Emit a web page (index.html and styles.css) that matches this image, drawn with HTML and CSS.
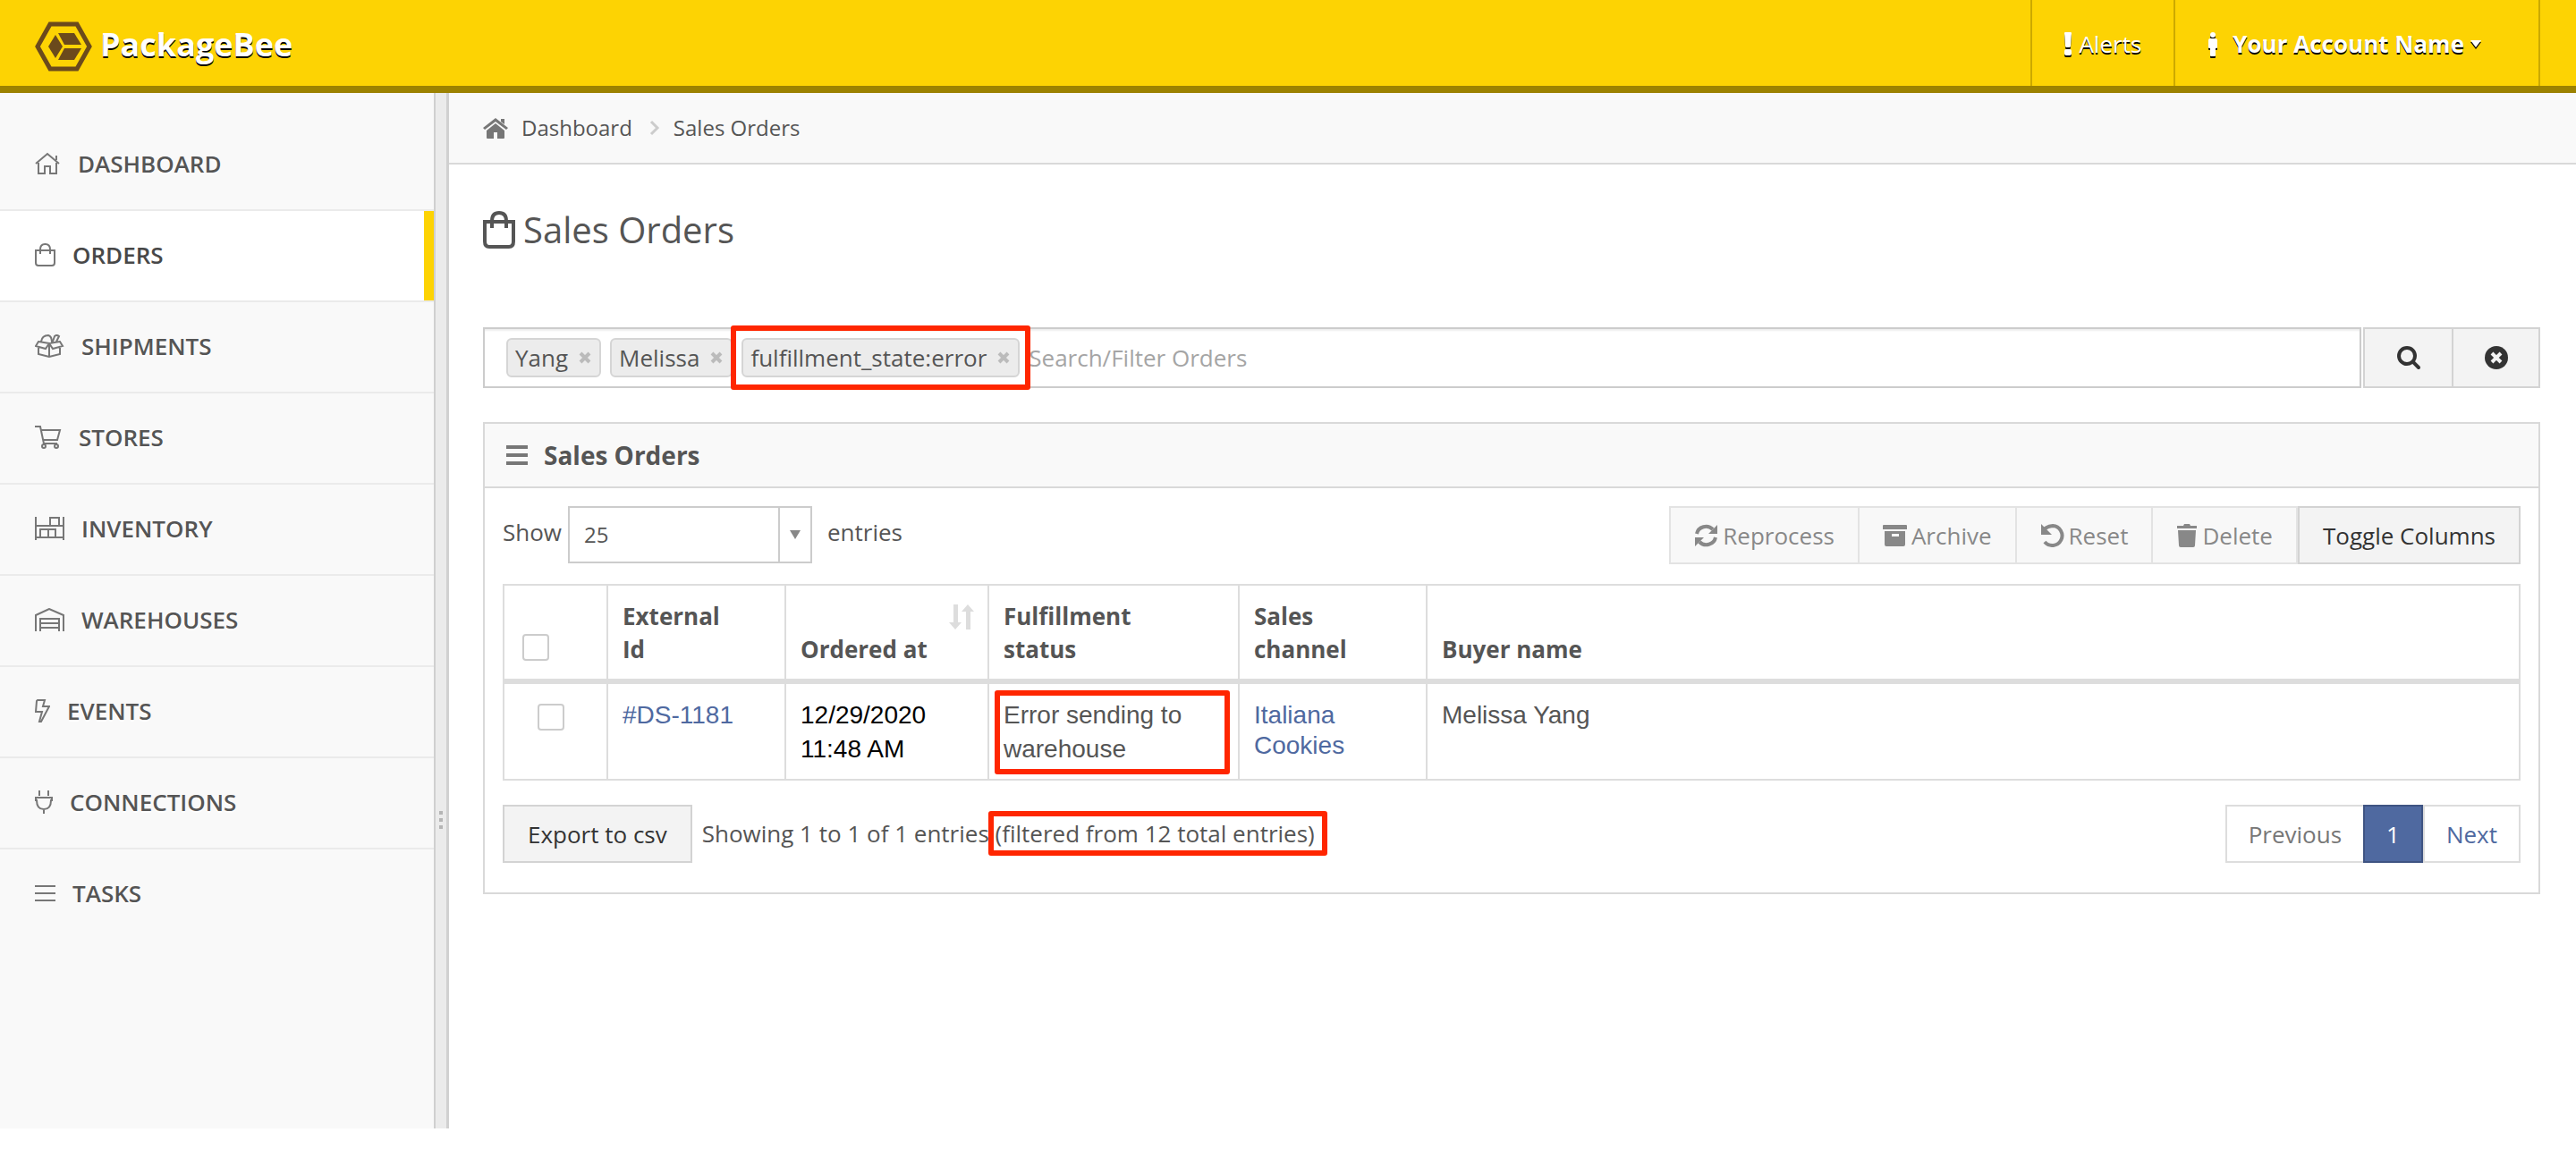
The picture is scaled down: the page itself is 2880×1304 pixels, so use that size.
FILE: index.html
```html
<!DOCTYPE html>
<html lang="en">
    <head>
        <meta charset="utf-8">
        <title>PackageBee - Sales Orders</title>
        <link rel="stylesheet" href="styles.css">
    </head>
    <body>
        <header class="navbar">
            <a class="brand" href="#">
                <svg class="logo" width="64" height="56" viewBox="0 0 64 56">
                    <path d="M17 3h30l14 25-14 25H17L3 28z" fill="none" stroke="#6b4a1c" stroke-width="5"/>
                    <path d="M26 13h18l8 13H33z" fill="#6b4a1c"/>
                    <path d="M33 30h19l-8 13H26z" fill="#6b4a1c"/>
                    <path d="M23 15l8 13-8 13-8-13z" fill="#6b4a1c"/>
                </svg>
                PackageBee
            </a>
            <nav class="user-nav">
                <a class="alerts" href="#">
                    <svg width="8" height="27" viewBox="0 0 8 27"><path d="M1 0h6q1 0 1 1L7 15q0 2-1 2H2q-1 0-1-2L0 1q0-1 1-1zM2 19h4q2 0 2 2v3q0 2-2 2H2q-2 0-2-2v-3q0-2 2-2z" fill="#fff"/></svg>
                    Alerts
                </a>
                <a class="account" href="#">
                    <svg width="12" height="27" viewBox="0 0 12 27"><circle cx="6" cy="3" r="3" fill="#fff"/><path d="M3 7h6q2 0 2 2v8q0 1-1 1H9v8q0 1-1 1H4q-1 0-1-1v-8H2q-1 0-1-1V9q0-2 2-2z" fill="#fff"/></svg>
                    <b>Your Account Name</b>
                    <svg class="caret" width="14" height="9" viewBox="0 0 14 9"><path d="M1 0h12L7 8z" fill="#fff"/></svg>
                </a>
            </nav>
        </header>

        <div class="layout">
            <nav class="sidebar">
                <a href="#">
                    <svg width="29" height="26" viewBox="0 0 29 26"><path d="M1 13L14 2l13 11M4 12v12h7v-8h6v8h7V12M24 9V4"/></svg>
                    Dashboard
                </a>
                <a class="active" href="#">
                    <svg width="23" height="26" viewBox="0 0 23 26"><path d="M1 8h21v14q0 3-3 3H4q-3 0-3-3zM6 12V7q0-6 5.500-6t5.500 6v5"/></svg>
                    Orders
                </a>
                <a href="#">
                    <svg width="33" height="26" viewBox="0 0 33 26"><path d="M4 14v8l12 3 12-3v-8M16 10v15M4 8l12 2-4 6-11-3zM28 8l-12 2 4 6 11-3zM7 8q1-7 8-7 4 1 4 8M20 8l2-6q2-2 5 0l-3 6"/></svg>
                    Shipments
                </a>
                <a href="#">
                    <svg width="30" height="26" viewBox="0 0 30 26"><path d="M0 1h6l4 19h15M7 5h21l-3 11H9"/><circle cx="10" cy="23" r="2"/><circle cx="24" cy="23" r="2"/></svg>
                    Stores
                </a>
                <a href="#">
                    <svg width="33" height="26" viewBox="0 0 33 26"><path d="M1 0v26M32 0v26M1 10h31M1 23h31M17 10V1h10v9M6 23v-9h17v9M15 14v9"/></svg>
                    Inventory
                </a>
                <a href="#">
                    <svg width="33" height="26" viewBox="0 0 33 26"><path d="M1 26V8l15-7 16 7v18M6 26V12h21v14M6 17h21M6 22h21"/></svg>
                    Warehouses
                </a>
                <a href="#">
                    <svg width="17" height="26" viewBox="0 0 17 26"><path d="M3 1h8l-2 7h7L7 25H5l3-11H1L2 2z"/></svg>
                    Events
                </a>
                <a href="#">
                    <svg width="20" height="26" viewBox="0 0 20 26"><path d="M5 0v6M15 0v6M1 8h18v3h-1q0 10-8 10T2 11H1zM10 21v5"/></svg>
                    Connections
                </a>
                <a href="#">
                    <svg width="23" height="26" viewBox="0 0 23 26"><path d="M0 5h23M0 13h23M0 21h23"/></svg>
                    Tasks
                </a>
            </nav>
            <div class="splitter"><i></i><i></i><i></i></div>

            <main class="content">
                <nav class="breadcrumb">
                    <svg width="28" height="23" viewBox="0 0 28 23"><path d="M14 0l14 11-2 2L14 4 2 13l-2-2zM20 1h4v6l-4-3zM14 6l10 8v8q0 1-1 1h-7v-7h-4v7H5q-1 0-1-1v-8z" fill="#777"/></svg>
                    <a href="#">Dashboard</a>
                    <svg class="chevron" width="12" height="18" viewBox="0 0 12 18"><path d="M2 2l7 7-7 7" fill="none" stroke="#ccc" stroke-width="3"/></svg>
                    <a href="#">Sales Orders</a>
                </nav>

                <h1>
                    <svg width="36" height="42" viewBox="0 0 36 42"><path d="M2 12h32v22q0 6-5 6H7q-5 0-5-6zM10 19v-8q0-9 8-9t8 9v8" fill="none" stroke="#555" stroke-width="4"/></svg>
                    Sales Orders
                </h1>

                <form class="search">
                    <div class="tag-field">
                        <span class="tag">Yang <button type="button" aria-label="Remove Yang"><svg width="14" height="14" viewBox="0 0 14 14"><path d="M2 2l10 10M12 2L2 12"/></svg></button></span>
                        <span class="tag">Melissa <button type="button" aria-label="Remove Melissa"><svg width="14" height="14" viewBox="0 0 14 14"><path d="M2 2l10 10M12 2L2 12"/></svg></button></span>
                        <span class="tag marked">fulfillment_state:error <button type="button" aria-label="Remove fulfillment_state:error"><svg width="14" height="14" viewBox="0 0 14 14"><path d="M2 2l10 10M12 2L2 12"/></svg></button></span>
                        <input type="text" aria-label="Search orders" placeholder="Search/Filter Orders">
                    </div>
                    <div class="search-buttons">
                        <button type="submit" aria-label="Search"><svg width="26" height="26" viewBox="0 0 1664 1664"><path d="M1152 704q0-185-131.500-316.500t-316.500-131.500-316.500 131.500-131.500 316.500 131.500 316.500 316.500 131.500 316.500-131.500 131.500-316.500zm512 832q0 52-38 90t-90 38q-54 0-90-38l-343-342q-179 124-399 124-143 0-273.500-55.500t-225-150-150-225-55.500-273.500 55.500-273.500 150-225 225-150 273.500-55.500 273.500 55.500 225 150 150 225 55.500 273.500q0 220-124 399l343 343q37 37 37 90z" fill="#333"/></svg></button>
                        <button type="reset" aria-label="Clear"><svg width="26" height="26" viewBox="0 0 26 26"><circle cx="13" cy="13" r="13" fill="#333"/><path d="M8 8l10 10M18 8L8 18" stroke="#f3f3f3" stroke-width="4"/></svg></button>
                    </div>
                </form>

                <section class="panel">
                    <h2>
                        <svg width="24" height="22" viewBox="0 0 24 22"><path d="M0 2h24M0 11h24M0 20h24" stroke="#777" stroke-width="4"/></svg>
                        Sales Orders
                    </h2>
                    <div class="panel-body">
                        <div class="toolbar">
                            <div class="page-length">
                                <label for="length">Show</label>
                                <span class="select">
                                    <select id="length">
                                        <option>10</option>
                                        <option selected>25</option>
                                        <option>50</option>
                                        <option>100</option>
                                    </select>
                                </span>
                                <span class="entries">entries</span>
                            </div>
                            <div class="btn-group">
                                <button class="btn" disabled>
                                    <svg width="27" height="26" viewBox="0 0 27 26"><path d="M3 11A10.500 10 0 0 1 21 6M24 15A10.500 10 0 0 1 6 20" fill="none" stroke="#888" stroke-width="4"/><path d="M26 1v10H16zM1 25V15h10z" fill="#888"/></svg>
                                    Reprocess
                                </button>
                                <button class="btn" disabled>
                                    <svg width="27" height="24" viewBox="0 0 27 24"><path d="M1 0h25q1 0 1 1v4H0V1q0-1 1-1zM2 7h23v15q0 2-2 2H4q-2 0-2-2zM10 10v3h8v-3z" fill="#888" fill-rule="evenodd"/></svg>
                                    Archive
                                </button>
                                <button class="btn" disabled>
                                    <svg width="27" height="26" viewBox="0 0 27 26"><path d="M4 6q5-4 10-4a11 11 0 1 1-9 18" fill="none" stroke="#888" stroke-width="4"/><path d="M1 0v12h12z" fill="#888"/></svg>
                                    Reset
                                </button>
                                <button class="btn" disabled>
                                    <svg width="24" height="26" viewBox="0 0 24 26"><path d="M9 0h6l1 2h7v3H1V2h7zM2 7h20l-1 17q0 2-2 2H5q-2 0-2-2z" fill="#888"/></svg>
                                    Delete
                                </button>
                                <button class="btn enabled">Toggle Columns</button>
                            </div>
                        </div>

                        <table class="orders">
                            <colgroup>
                                <col class="col-check">
                                <col class="col-id">
                                <col class="col-date">
                                <col class="col-status">
                                <col class="col-channel">
                                <col>
                            </colgroup>
                            <thead>
                                <tr>
                                    <th class="check-all"><input type="checkbox" aria-label="Select all"></th>
                                    <th>External<br>Id</th>
                                    <th class="sortable">
                                        Ordered at
                                        <svg width="28" height="28" viewBox="0 0 28 28"><path d="M5 0h5v20h4l-7 8-7-8h5zM19 28V8h-5l7-8 7 8h-4v20z" fill="#ddd"/></svg>
                                    </th>
                                    <th>Fulfillment<br>status</th>
                                    <th>Sales<br>channel</th>
                                    <th>Buyer name</th>
                                </tr>
                            </thead>
                            <tbody>
                                <tr>
                                    <td class="check"><input type="checkbox" aria-label="Select #DS-1181"></td>
                                    <td><a href="#">#DS-1181</a></td>
                                    <td class="date">12/29/2020<br>11:48 AM</td>
                                    <td><div class="marked">Error sending to<br>warehouse</div></td>
                                    <td class="channel"><a href="#">Italiana<br>Cookies</a></td>
                                    <td>Melissa Yang</td>
                                </tr>
                            </tbody>
                        </table>

                        <div class="table-footer">
                            <button class="btn enabled">Export to csv</button>
                            <p class="info">Showing 1 to 1 of 1 entries <span class="marked">(filtered from 12 total entries)</span></p>
                            <nav class="pagination">
                                <a class="previous" href="#">Previous</a>
                                <a class="current" href="#">1</a>
                                <a href="#">Next</a>
                            </nav>
                        </div>
                    </div>
                </section>
            </main>
        </div>
    </body>
</html>
```

FILE: styles.css
```css
* {
    box-sizing: border-box;
}

body {
    margin: 0;
    font-family: "Open Sans", "Noto Sans", sans-serif;
    font-size: 26px;
    line-height: 36px;
    color: #555;
    background: #fff;
}

a {
    color: #4f69a0;
    text-decoration: none;
}

button, input, select {
    font: inherit;
    color: inherit;
}

svg {
    flex: none;
}

/* header */
.navbar {
    display: flex;
    justify-content: space-between;
    height: 104px;
    background: #fdd303;
    border-bottom: 8px solid #9c8200;
}

.navbar a {
    display: flex;
    align-items: center;
    color: #fff;
    text-shadow: 0 2px 0 #000;
}

.navbar .brand {
    gap: 9px;
    padding: 4px 0 0 39px;
    font-size: 36px;
    font-weight: bold;
}

.brand .logo {
    margin-top: 4px;
}

.user-nav {
    display: flex;
    margin-right: 40px;
    border-right: 2px solid #cca900;
}

.user-nav a {
    padding: 2px 36px 0;
    border-left: 2px solid #cca900;
}

.user-nav svg {
    filter: drop-shadow(0 2px 0 #000);
}

.alerts {
    gap: 8px;
}

.account {
    gap: 16px;
}

.user-nav .account {
    padding-right: 63px;
}

.account .caret {
    margin-left: -10px;
}

/* sidebar */
.layout {
    display: flex;
    min-height: calc(100vh - 146px);
    margin-bottom: 42px;
}

.sidebar {
    width: 485px;
    padding-top: 30px;
    background: #f9f9f9;
}

.sidebar a {
    display: flex;
    align-items: center;
    gap: 19px;
    height: 102px;
    padding: 0 0 2px 39px;
    border-bottom: 2px solid #ebebeb;
    color: #555;
    font-weight: 600;
    text-transform: uppercase;
    text-shadow: 0 2px 0 #fff;
}

.sidebar a:last-child {
    border-color: transparent;
}

.sidebar a.active {
    background: #fff;
    box-shadow: inset -11px 0 0 #fdd303;
    color: #484848;
}

.sidebar svg {
    fill: none;
    stroke: #777;
    stroke-width: 2;
}

.splitter {
    display: flex;
    flex-direction: column;
    align-items: center;
    gap: 4px;
    width: 17px;
    padding-top: 803px;
    background: #ebebeb;
    border-left: 2px solid #d0d0d0;
    border-right: 3px solid #d0d0d0;
}

.splitter i {
    width: 4px;
    height: 4px;
    background: #b5b5b5;
}

/* page */
.content {
    flex: 1;
    min-width: 0;
}

.breadcrumb {
    display: flex;
    align-items: center;
    height: 80px;
    padding-left: 38px;
    background: #f9f9f9;
    border-bottom: 2px solid #d9d9d9;
    font-size: 24px;
}

.breadcrumb a {
    margin-left: 15px;
    color: #555;
}

.breadcrumb .chevron {
    margin-left: 19px;
}

h1 {
    display: flex;
    align-items: center;
    gap: 9px;
    margin: 44px 38px 80px;
    font-size: 40px;
    font-weight: normal;
    line-height: 58px;
}

.search {
    display: flex;
    gap: 2px;
    margin: 0 40px 38px 38px;
}

.tag-field {
    flex: 1;
    display: flex;
    align-items: center;
    gap: 10px;
    height: 68px;
    padding: 0 24px;
    border: 2px solid #ccc;
    box-shadow: inset 0 2px 2px #eee;
}

.tag {
    display: flex;
    align-items: center;
    gap: 12px;
    height: 44px;
    padding: 0 9px 0 8px;
    background: #ececec;
    border: 2px solid #d5d5d5;
    border-radius: 6px;
}

.tag button {
    display: flex;
    padding: 0;
    border: 0;
    background: none;
}

.tag svg {
    fill: none;
    stroke: #bbb;
    stroke-width: 4;
}

.tag-field input {
    flex: 1;
    padding: 0;
    border: 0;
    background: none;
    outline: none;
}

.tag-field input::placeholder {
    color: #a5a5a5;
}

.search-buttons {
    display: flex;
    border: 2px solid #d3d3d3;
}

.search-buttons button {
    display: flex;
    align-items: center;
    justify-content: center;
    width: 97px;
    padding: 0;
    border: 0;
    background: #f3f3f3;
}

.search-buttons button + button {
    border-left: 2px solid #d3d3d3;
}

/* red frame drawn over the element */
.marked {
    position: relative;
}

.marked::after {
    content: "";
    position: absolute;
    inset: -9px -7px -9px -10px;
    border: 6px solid #ff2600;
    border-radius: 3px;
    pointer-events: none;
}

.tag.marked::after {
    inset: -16px -14px;
}

.info .marked::after {
    inset: -7px -14px -7px -8px;
}

/* panel */
.panel {
    margin: 0 40px 0 38px;
    border: 2px solid #d9d9d9;
}

.panel h2 {
    display: flex;
    align-items: center;
    gap: 18px;
    height: 72px;
    margin: 0;
    padding-left: 24px;
    background: #f9f9f9;
    border-bottom: 2px solid #d9d9d9;
    font-size: 28px;
}

.panel-body {
    padding: 20px 20px 33px;
}

.toolbar, .page-length, .btn-group, .table-footer, .pagination {
    display: flex;
}

.toolbar {
    justify-content: space-between;
    margin-bottom: 22px;
}

.page-length {
    line-height: 58px;
}

.select {
    position: relative;
    width: 273px;
    margin: 0 17px 0 7px;
}

.select select {
    appearance: none;
    display: block;
    width: 100%;
    height: 64px;
    padding: 0 16px;
    border: 2px solid #ccc;
    border-radius: 0;
    background: #fff;
    font-size: 24px;
    line-height: 36px;
}

.select::before {
    content: "";
    position: absolute;
    right: 36px;
    top: 2px;
    height: 60px;
    border-left: 2px solid #ccc;
    pointer-events: none;
}

.select::after {
    content: "";
    position: absolute;
    right: 13px;
    top: 27px;
    border: 6px solid transparent;
    border-top: 10px solid #888;
    border-bottom: 0;
    pointer-events: none;
}

.btn {
    display: flex;
    align-items: center;
    gap: 5px;
    height: 65px;
    padding: 0 26px;
    border: 2px solid #e3e3e3;
    background: #f8f8f8;
    color: #888;
}

.btn + .btn {
    border-left-width: 0;
}

.btn.enabled {
    border: 2px solid #d3d3d3;
    background: #f3f3f3;
    color: #333;
}

/* table */
.orders {
    width: 100%;
    table-layout: fixed;
    border-collapse: collapse;
}

.col-check {
    width: 116px;
}

.col-id {
    width: 199px;
}

.col-date {
    width: 227px;
}

.col-status {
    width: 280px;
}

.col-channel {
    width: 210px;
}

.orders th, .orders td {
    padding: 16px 16px 14px;
    border: 2px solid #ddd;
    text-align: left;
    vertical-align: top;
}

.orders th {
    border-bottom-width: 6px;
    line-height: 37px;
    vertical-align: bottom;
}

.orders td {
    font-family: "Liberation Sans", Arial, sans-serif;
    font-size: 28px;
    line-height: 38px;
}

.orders input {
    appearance: none;
    display: block;
    width: 30px;
    height: 30px;
    margin: 6px 0 6px 21px;
    border: 2px solid #ccc;
    border-radius: 4px;
    background: #fff;
}

.orders .check-all input {
    margin-left: 4px;
}

.sortable {
    position: relative;
}

.sortable svg {
    position: absolute;
    top: 21px;
    right: 15px;
}

.orders .date {
    color: #000;
}

.orders .channel a {
    display: block;
    line-height: 34px;
    padding-top: 2px;
}

.table-footer {
    margin-top: 27px;
}

.info {
    flex: 1;
    margin: 14px 0 0 11px;
}

.pagination a {
    padding: 14px 24px 13px;
    border: 2px solid #ddd;
    line-height: 34px;
}

.pagination .previous {
    border-right: 0;
    color: #777;
}

.pagination .current {
    border-color: #3f5482;
    background: #4f69a0;
    color: #fff;
}
```
